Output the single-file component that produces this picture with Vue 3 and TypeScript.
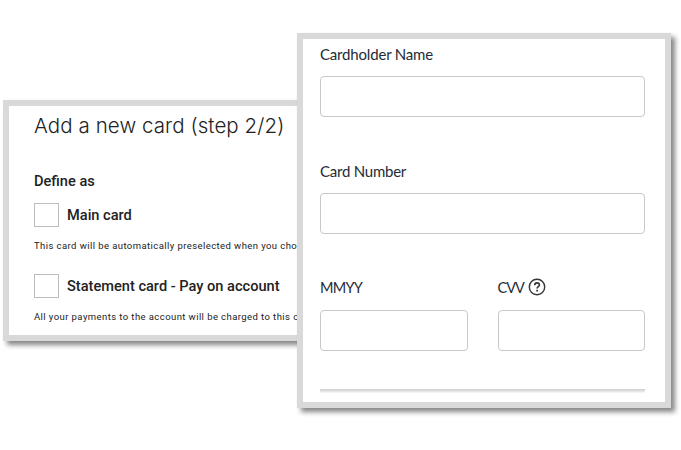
<script setup lang="ts">
interface CardOption {
  id: string
  label: string
  hint: string
}

const options: CardOption[] = [
  { id: 'main', label: 'Main card', hint: 'This card will be automatically preselected when you choose' },
  { id: 'statement', label: 'Statement card - Pay on account', hint: 'All your payments to the account will be charged to this card' },
]
</script>

<template>
  <main class="stage">
    <section class="panel define">
      <h1 class="title">Add a new card (step 2/2)</h1>
      <h2 class="subtitle">Define as</h2>
      <div v-for="option in options" :key="option.id" class="option" :class="option.id">
        <label class="choice">
          <input class="box" type="checkbox" />
          <span class="choice-label">{{ option.label }}</span>
        </label>
        <p class="hint">{{ option.hint }}</p>
      </div>
    </section>

    <section class="panel details">
      <label class="field">
        <span class="label name">Cardholder Name</span>
        <input class="input" type="text" />
      </label>
      <label class="field">
        <span class="label number">Card Number</span>
        <input class="input" type="text" />
      </label>
      <div class="pair">
        <label class="field">
          <span class="label expiry">MMYY</span>
          <input class="input" type="text" />
        </label>
        <label class="field">
          <span class="label"><span class="cvv">CVV</span>
            <svg class="help" viewBox="0 0 18 18" fill="none" stroke="#353535">
              <circle cx="9" cy="9" r="7.7" stroke-width="1.4" />
              <path d="M6.7 7.2C6.7 5.7 7.6 4.9 9 4.9s2.4.8 2.4 2c0 1.7-2.3 1.9-2.3 3.6" stroke-width="1.6" />
              <path d="M9.1 11.7v1.7" stroke-width="1.7" />
            </svg>
          </span>
          <input class="input" type="text" />
        </label>
      </div>
      <div class="rule"></div>
    </section>
  </main>
</template>

<style>
body {
  background: #fff;
}
</style>

<style scoped>
.stage {
  position: relative;
  width: 681px;
  height: 450px;
  overflow: hidden;
  background: #fff;
}
.panel {
  position: absolute;
  box-sizing: border-box;
  border: 6px solid #d9d9d9;
  background: #fff;
  box-shadow: 4px 4px 5px rgba(0, 0, 0, 0.48);
}
.define {
  left: 3px;
  top: 100px;
  width: 420px;
  height: 241px;
  padding: 0 0 0 25px;
  overflow: hidden;
  white-space: nowrap;
  font-family: Roboto, sans-serif;
  color: #222;
}
.title {
  margin: 6px 0 0;
  font: 300 20.5px/28px Inter, sans-serif;
  letter-spacing: 0.08px;
}
.subtitle {
  margin: 31px 0 0;
  font-size: 14.6px;
  font-weight: 500;
  line-height: 20px;
}
.option {
  margin-top: 12px;
}
.statement {
  margin-top: 20px;
}
.choice {
  display: flex;
  align-items: center;
  height: 24px;
}
.box {
  appearance: none;
  box-sizing: border-box;
  width: 25px;
  height: 24px;
  margin: 0 8px 0 0;
  border: 1px solid #bdbdbd;
  background: #fff;
}
.choice-label {
  font-size: 14.6px;
  font-weight: 500;
  line-height: 24px;
}
.hint {
  margin: 11px 0 0;
  font-size: 9.5px;
  letter-spacing: 0.42px;
  line-height: 16px;
}
.details {
  left: 297px;
  top: 33px;
  width: 374px;
  height: 375px;
  padding: 4px 20px 0 17px;
  color: #252b36;
}
.field {
  display: block;
  height: 117px;
}
.label {
  display: flex;
  align-items: center;
  height: 22px;
  font: 400 15px/22px Lato, sans-serif;
}
.name {
  letter-spacing: -0.18px;
}
.number {
  letter-spacing: -0.24px;
}
.expiry {
  font-size: 14.5px;
  letter-spacing: -0.7px;
}
.cvv {
  font-size: 14.5px;
  letter-spacing: -1px;
}
.input {
  display: block;
  box-sizing: border-box;
  width: 100%;
  height: 41px;
  margin: 11px 0 0;
  border: 1px solid #c8c8c8;
  border-radius: 4px;
  background: #fff;
}
.pair {
  display: grid;
  grid-template-columns: 1fr 1fr;
  column-gap: 30px;
}
.pair .field {
  height: 112px;
}
.help {
  width: 18px;
  height: 18px;
  margin: 0 0 2px 4px;
}
.rule {
  height: 4px;
  background: linear-gradient(#d4d4d4 0 25%, #e2e2e2 50%, #fafafa);
}
</style>
